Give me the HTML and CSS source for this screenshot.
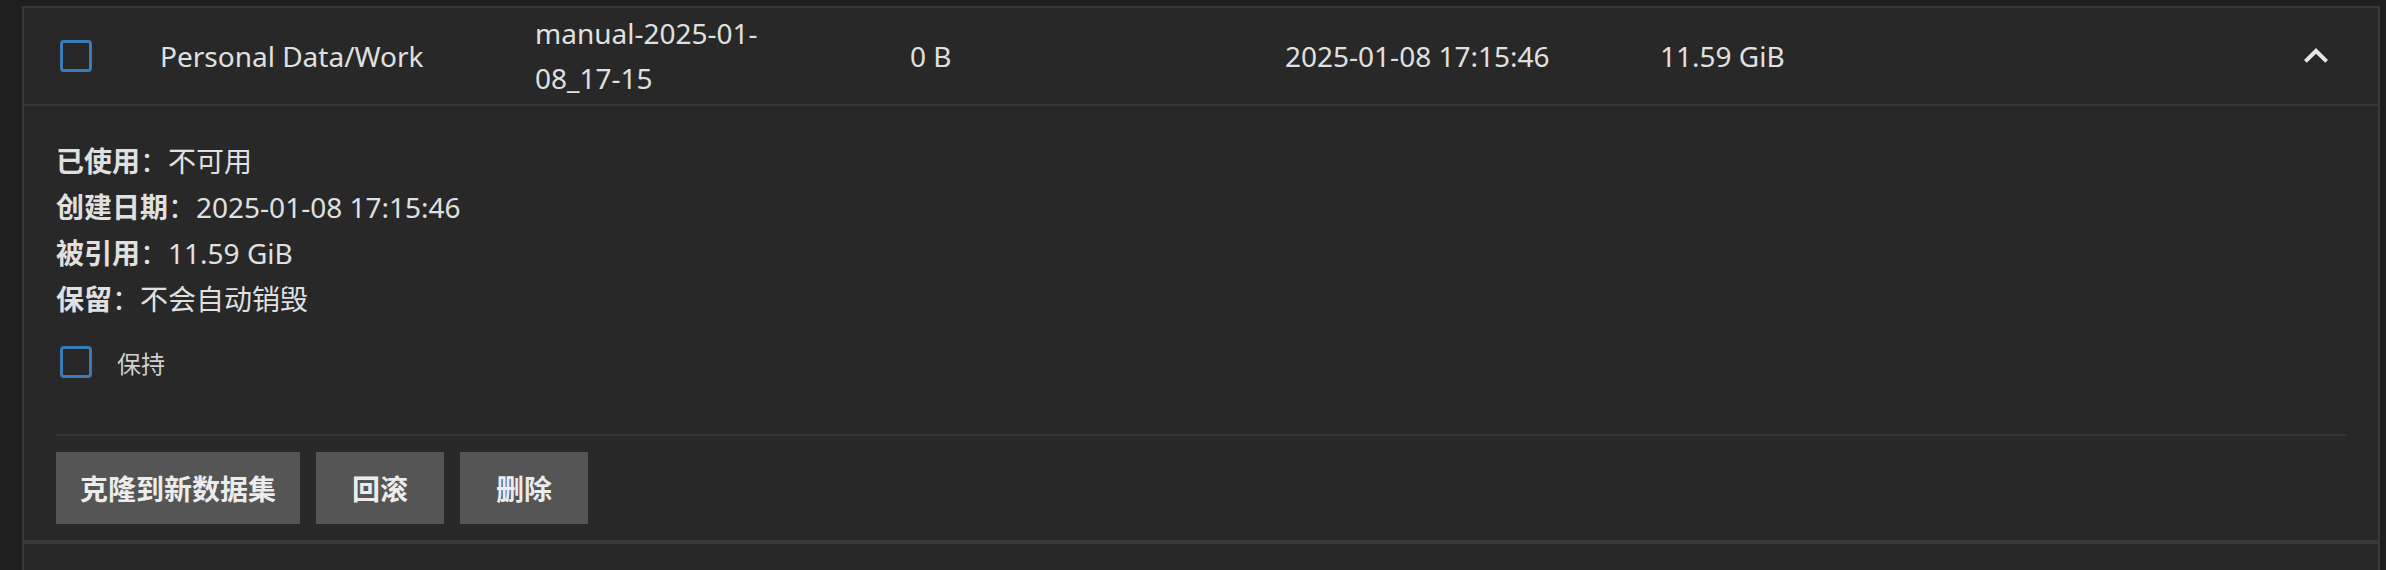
FILE: index.html
```html
<!DOCTYPE html>
<html lang="zh-CN">
<head>
<meta charset="utf-8">
<title>Snapshot</title>
<link rel="stylesheet" href="styles.css">
</head>
<body>
<div class="panel">
  <div class="row">
    <div class="cell cell-check"><span class="checkbox"></span></div>
    <div class="cell">Personal Data/Work</div>
    <div class="cell"><span class="snap-name">manual-2025-01-<wbr>08_17-15</span></div>
    <div class="cell">0 B</div>
    <div class="cell">2025-01-08 17:15:46</div>
    <div class="cell">11.59 GiB</div>
    <div class="cell cell-toggle">
      <svg class="chevron" viewBox="0 0 24 24" width="48" height="48" aria-hidden="true"><path d="M12 8l-6 6 1.41 1.41L12 10.83l4.59 4.58L18 14z"/></svg>
    </div>
  </div>
  <div class="details">
    <div class="info-line"><span class="info-label">已使用</span>：<span class="info-value">不可用</span></div>
    <div class="info-line"><span class="info-label">创建日期</span>：<span class="info-value">2025-01-08 17:15:46</span></div>
    <div class="info-line"><span class="info-label">被引用</span>：<span class="info-value">11.59 GiB</span></div>
    <div class="info-line"><span class="info-label">保留</span>：<span class="info-value">不会自动销毁</span></div>
    <label class="hold">
      <span class="checkbox"></span>
      <span class="hold-label">保持</span>
    </label>
    <div class="separator"></div>
    <div class="actions">
      <button class="btn">克隆到新数据集</button>
      <button class="btn">回滚</button>
      <button class="btn">删除</button>
    </div>
  </div>
  <div class="next-row"></div>
</div>
</body>
</html>
```

FILE: styles.css
```css
html, body {
  margin: 0;
  height: 100%;
}

body {
  background: #1f1f1f;
  padding: 6px 6px 0 22px;
  box-sizing: border-box;
  overflow: hidden;
  font-family: "Noto Sans", "Noto Sans CJK SC", sans-serif;
  font-size: 28px;
  color: #e0e0e0;
}

.panel {
  background: #282828;
  border-top: 2px solid #383838;
  border-left: 2px solid #383838;
  border-right: 2px solid #383838;
}

.row {
  display: grid;
  grid-template-columns: 136px 375px 375px 375px 375px 1fr 124px;
  align-items: center;
  height: 96px;
  border-bottom: 2px solid #383838;
}

.cell {
  white-space: nowrap;
}

.cell-check {
  padding-left: 36px;
  display: flex;
  align-items: center;
}

.snap-name {
  display: block;
  max-width: 240px;
  white-space: normal;
  line-height: 45px;
}

.cell-toggle {
  display: flex;
  justify-content: center;
  align-items: center;
}

.chevron {
  fill: #e6e6e6;
  display: block;
}

.checkbox {
  display: inline-block;
  width: 32px;
  height: 32px;
  box-sizing: border-box;
  border: 3px solid #3a7cb8;
  border-radius: 4px;
}

.details {
  padding: 32px 32px 16px;
  border-bottom: 4px solid #383838;
}

.info-line {
  line-height: 46px;
  height: 46px;
}

.info-label {
  font-weight: 700;
}

.hold {
  display: flex;
  align-items: center;
  height: 48px;
  margin-top: 16px;
  padding-left: 4px;
}

.hold-label {
  margin-left: 25px;
  font-size: 24px;
  color: #cfcfcf;
}

.separator {
  height: 2px;
  background: #363636;
  margin-top: 48px;
}

.actions {
  display: flex;
  gap: 16px;
  margin-top: 16px;
}

.btn {
  height: 72px;
  min-width: 128px;
  padding: 0 24px;
  border: none;
  border-radius: 0;
  background: #555555;
  color: #ececec;
  font-family: "Noto Sans", "Noto Sans CJK SC", sans-serif;
  font-size: 28px;
  font-weight: 700;
}

.next-row {
  height: 60px;
}
```
